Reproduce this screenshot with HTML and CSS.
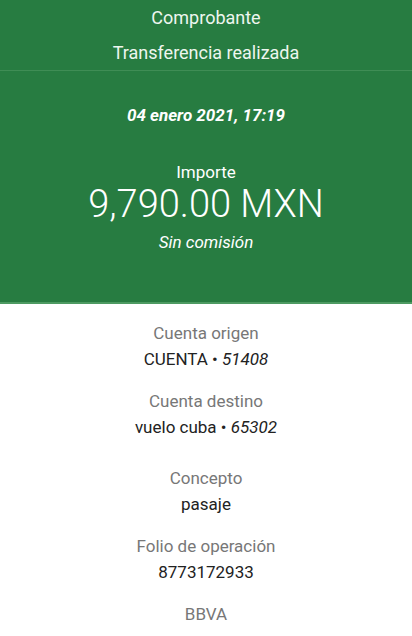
FILE: index.html
```html
<!DOCTYPE html>
<html lang="es">

<head>
  <meta charset="utf-8">
  <title>Comprobante</title>
  <link rel="stylesheet" href="styles.css">
</head>

<body>
  <div id="header">
    <div class="title">Comprobante</div>
    <div class="title">Transferencia realizada</div>
  </div>
  <div id="summary">
    <div class="date">04 enero 2021, 17:19</div>
    <div class="amount-label">Importe</div>
    <div class="amount">9,790.00 MXN</div>
    <div class="fee">Sin comisión</div>
  </div>
  <div id="details">
    <div class="item">
      <div class="label">Cuenta origen</div>
      <div class="value">CUENTA • <i>51408</i></div>
    </div>
    <div class="item wide">
      <div class="label">Cuenta destino</div>
      <div class="value">vuelo cuba • <i>65302</i></div>
    </div>
    <div class="item">
      <div class="label">Concepto</div>
      <div class="value">pasaje</div>
    </div>
    <div class="item">
      <div class="label">Folio de operación</div>
      <div class="value">8773172933</div>
    </div>
    <div class="item">
      <div class="label">BBVA</div>
    </div>
  </div>
</body>

</html>
```

FILE: styles.css
```css
html {
  overflow: hidden;
}

body {
  margin: 0;
  padding: 0;
  background: white;
  font-family: Roboto, "Liberation Sans", sans-serif;
  text-align: center;
}

#header {
  background: #277c41;
  color: #eef6ef;
  border-bottom: 1px solid #3f8d55;
}

#header .title {
  height: 35px;
  line-height: 35px;
  font-size: 18px;
}

#summary {
  background: #277c41;
  color: white;
  padding-top: 32px;
  height: 199px;
  border-bottom: 2px solid #4d9a62;
}

.date {
  font-size: 17px;
  font-weight: bold;
  font-style: italic;
  line-height: 24px;
}

.amount-label {
  margin-top: 33px;
  font-size: 17px;
  line-height: 24px;
}

.amount {
  font-size: 38px;
  font-weight: 300;
  line-height: 40px;
}

.fee {
  margin-top: 7px;
  font-size: 17px;
  font-style: italic;
  line-height: 22px;
}

#details {
  padding-top: 16px;
}

.item {
  margin-bottom: 16px;
}

.item.wide {
  margin-bottom: 25px;
}

.label {
  color: #777;
  font-size: 17px;
  line-height: 26px;
}

.value {
  color: #222;
  font-size: 17px;
  line-height: 26px;
}
```
